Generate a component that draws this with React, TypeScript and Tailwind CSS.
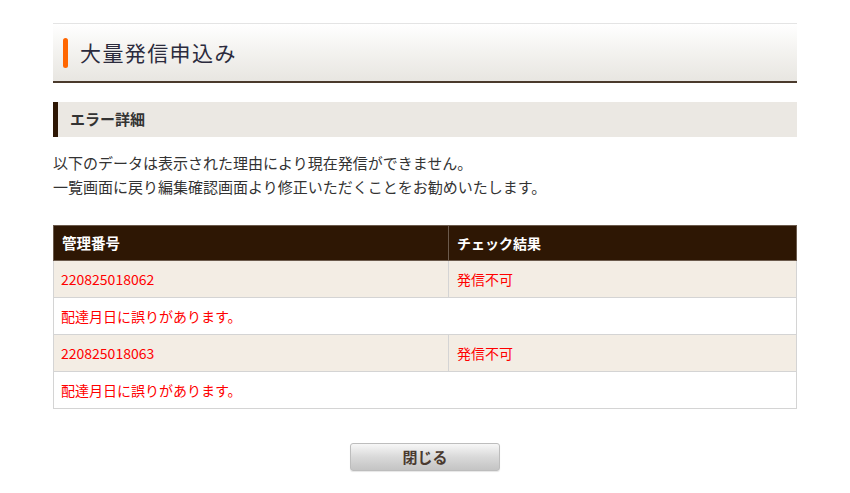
const rows = [
  { id: "220825018062", result: "発信不可", message: "配達月日に誤りがあります。" },
  { id: "220825018063", result: "発信不可", message: "配達月日に誤りがあります。" },
];

export default function App() {
  return (
    <div
      className="min-h-screen bg-white text-[#333]"
      style={{ fontFamily: '"Noto Sans CJK JP", "Noto Sans", sans-serif' }}
    >
      <div className="mx-auto w-[744px] pt-[23px] pb-6">
        {/* Page title */}
        <div className="flex h-[60px] items-center border-t border-[#e4e4e4] border-b-2 border-b-[#4a3a2c] bg-gradient-to-b from-[#ffffff] via-[#f3f2ef] to-[#e8e6e1] pl-[10px]">
          <span className="h-[30px] w-[5px] rounded-full bg-[#ff6600]" />
          <h1 className="ml-[12px] text-[21px] tracking-[1.4px] text-[#2b2b3d]">大量発信申込み</h1>
        </div>

        {/* Section header */}
        <div className="mt-[19px] flex h-[35px] items-center border-l-[5px] border-[#2e1704] bg-[#ebe8e3] pl-[12px]">
          <h2 className="text-[15px] font-bold text-[#333]">エラー詳細</h2>
        </div>

        <div className="mt-[14px] text-[15px] leading-[24px] text-[#333]">
          <p>以下のデータは表示された理由により現在発信ができません。</p>
          <p>一覧画面に戻り編集確認画面より修正いただくことをお勧めいたします。</p>
        </div>

        {/* Result table */}
        <table className="mt-[26px] w-full border-collapse text-[14px]">
          <thead>
            <tr className="h-[35px] bg-[#2e1704] text-left text-white">
              <th className="w-[395px] border border-[#6b5a4c] pl-[8px] text-[14.5px] font-bold">管理番号</th>
              <th className="border border-[#6b5a4c] pl-[8px] text-[14px] font-bold">チェック結果</th>
            </tr>
          </thead>
          <tbody>
            {rows.map((r) => (
              <>
                <tr key={r.id} className="h-[37px] bg-[#f3ede4] text-[#ff0000]">
                  <td className="border border-[#d4d4d4] pl-[7px]">{r.id}</td>
                  <td className="border border-[#d4d4d4] pl-[8px]">{r.result}</td>
                </tr>
                <tr key={r.id + "-msg"} className="h-[37px] bg-white text-[#ff0000]">
                  <td colSpan={2} className="border border-[#d4d4d4] pl-[7px]">
                    {r.message}
                  </td>
                </tr>
              </>
            ))}
          </tbody>
        </table>

        <div className="mt-[34px] flex justify-center">
          <button
            type="button"
            className="h-[28px] w-[150px] rounded-[3px] border border-[#bdbdbd] bg-gradient-to-b from-[#f7f7f7] via-[#d9d9d9] to-[#c4c4c4] text-[15px] font-bold text-[#4a3a30] shadow-[0_1px_1px_rgba(0,0,0,0.1)]"
          >
            閉じる
          </button>
        </div>
      </div>
    </div>
  );
}
